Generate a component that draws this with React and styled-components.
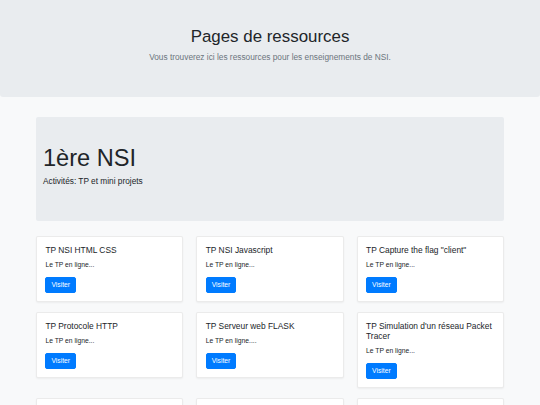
import styled, { createGlobalStyle } from "styled-components";

const GlobalStyle = createGlobalStyle`
  body {
    margin: 0;
    background: #f8f9fa;
    font-family: "Liberation Sans", Arial, Helvetica, sans-serif;
    color: #212529;
  }
`;

const Hero = styled.header`
  height: 97px;
  box-sizing: border-box;
  padding-top: 27px;
  background: #e9ecef;
  border-radius: 0 0 3px 3px;
  text-align: center;
`;

const HeroTitle = styled.h1`
  margin: 0 0 4px;
  font-size: 16.9px;
  font-weight: 400;
  line-height: 20px;
`;

const HeroLead = styled.p`
  margin: 0;
  font-size: 8.3px;
  line-height: 12px;
  color: #6c757d;
`;

const Container = styled.main`
  padding: 20px 36px 0;
`;

const Section = styled.section`
  background: #e9ecef;
  border-radius: 2px;
  padding: 27px 7px 0;
  height: 104px;
  box-sizing: border-box;
  margin-bottom: 15px;
`;

const SectionTitle = styled.h2`
  margin: 0 0 3.4px;
  font-size: 23.6px;
  font-weight: 400;
  line-height: 28px;
`;

const SectionLead = styled.p`
  margin: 0;
  font-size: 8.3px;
  line-height: 12.6px;
`;

const Grid = styled.div`
  display: grid;
  grid-template-columns: repeat(3, 1fr);
  column-gap: 13px;
  row-gap: 10px;
  align-items: start;
`;

const Card = styled.div`
  display: flex;
  flex-direction: column;
  align-items: flex-start;
  background: #fff;
  border: 1px solid rgba(0, 0, 0, 0.08);
  border-radius: 2px;
  box-shadow: 0 1px 2px rgba(0, 0, 0, 0.05);
  padding: 8px 8.4px 7.6px;
`;

const CardTitle = styled.h5`
  margin: 0 0 5px;
  font-size: 8.4px;
  font-weight: 400;
  line-height: 10.2px;
`;

const CardText = styled.p`
  margin: 0 0 6.5px;
  font-size: 6.75px;
  line-height: 10.1px;
`;

const VisitButton = styled.a`
  display: block;
  background: #007bff;
  border: 1px solid #007bff;
  border-radius: 2px;
  color: #fff;
  font-size: 6.75px;
  line-height: 10px;
  padding: 2.2px 5px;
  text-decoration: none;
`;

const cards = [
  { title: "TP NSI HTML CSS", text: "Le TP en ligne..." },
  { title: "TP NSI Javascript", text: "Le TP en ligne..." },
  { title: 'TP Capture the flag "client"', text: "Le TP en ligne..." },
  { title: "TP Protocole HTTP", text: "Le TP en ligne..." },
  { title: "TP Serveur web FLASK", text: "Le TP en ligne...." },
  { title: "TP Simulation d'un réseau Packet Tracer", text: "Le TP en ligne..." },
  { title: "TP Python", text: "Le TP en ligne..." },
  { title: "TP Base de données", text: "Le TP en ligne..." },
  { title: "Mini projet", text: "Le TP en ligne..." },
];

export default function App() {
  return (
    <>
      <GlobalStyle />
      <Hero>
        <HeroTitle>Pages de ressources</HeroTitle>
        <HeroLead>Vous trouverez ici les ressources pour les enseignements de NSI.</HeroLead>
      </Hero>
      <Container>
        <Section>
          <SectionTitle>1ère NSI</SectionTitle>
          <SectionLead>Activités: TP et mini projets</SectionLead>
        </Section>
        <Grid>
          {cards.map((c) => (
            <Card key={c.title}>
              <CardTitle>{c.title}</CardTitle>
              <CardText>{c.text}</CardText>
              <VisitButton href="#">Visiter</VisitButton>
            </Card>
          ))}
        </Grid>
      </Container>
    </>
  );
}
